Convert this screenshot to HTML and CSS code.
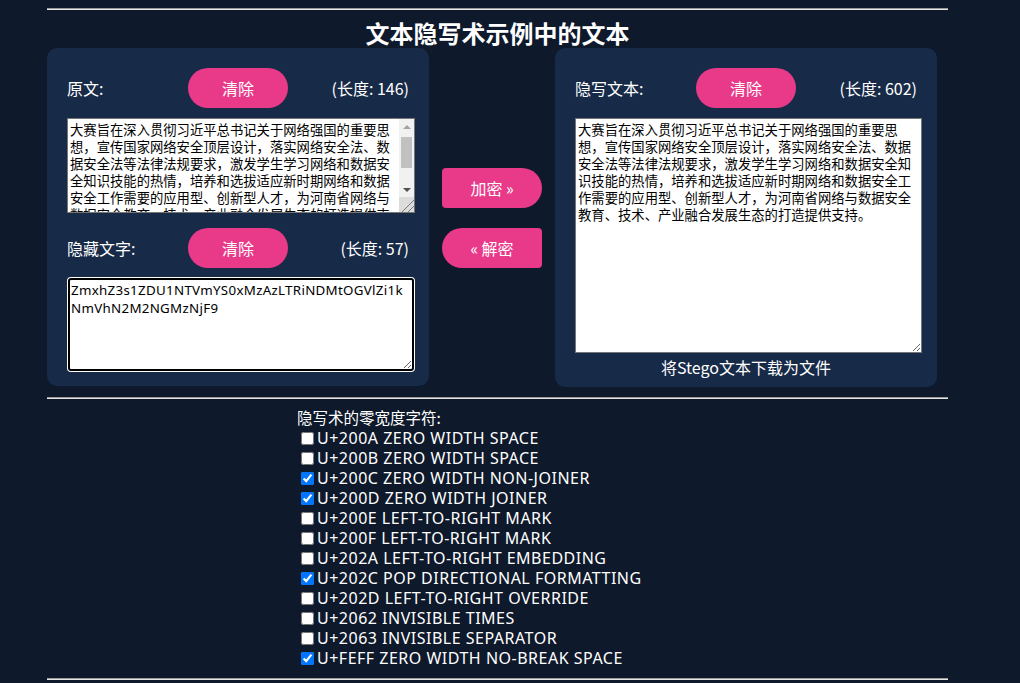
FILE: index.html
```html
<!DOCTYPE html>
<html lang="zh">
<head>
<meta charset="utf-8">
<title>文本隐写术示例中的文本</title>
<link rel="stylesheet" href="styles.css">
</head>
<body>
<div class="page">
  <hr class="rule">
  <h1 class="title">文本隐写术示例中的文本</h1>
  <div class="workspace">
    <section class="panel panel-left">
      <div class="row">
        <span class="label">原文:</span>
        <button class="clear">清除</button>
        <span class="len">(长度: 146)</span>
      </div>
      <div class="plain-wrap">
        <textarea class="box box-plain">大赛旨在深入贯彻习近平总书记关于网络强国的重要思想，宣传国家网络安全顶层设计，落实网络安全法、数据安全法等法律法规要求，激发学生学习网络和数据安全知识技能的热情，培养和选拔适应新时期网络和数据安全工作需要的应用型、创新型人才，为河南省网络与数据安全教育、技术、产业融合发展生态的打造提供支持。</textarea>
        <div class="sbar" aria-hidden="true">
          <div class="sbar-btn"><span class="arrow-up"></span></div>
          <div class="sbar-track"><div class="sbar-thumb"></div></div>
          <div class="sbar-btn"><span class="arrow-down"></span></div>
          <div class="sbar-corner"></div>
        </div>
      </div>
      <div class="row row-second">
        <span class="label">隐藏文字:</span>
        <button class="clear">清除</button>
        <span class="len">(长度: 57)</span>
      </div>
      <textarea class="box box-hidden">ZmxhZ3s1ZDU1NTVmYS0xMzAzLTRiNDMtOGVlZi1k
NmVhN2M2NGMzNjF9</textarea>
    </section>
    <div class="actions">
      <button class="act act-enc">加密 »</button>
      <button class="act act-dec">« 解密</button>
    </div>
    <section class="panel panel-right">
      <div class="row">
        <span class="label">隐写文本:</span>
        <button class="clear">清除</button>
        <span class="len">(长度: 602)</span>
      </div>
      <textarea class="box box-stego">大赛旨在深入贯彻习近平总书记关于网络强国的重要思想，宣传国家网络安全顶层设计，落实网络安全法、数据安全法等法律法规要求，激发学生学习网络和数据安全知识技能的热情，培养和选拔适应新时期网络和数据安全工作需要的应用型、创新型人才，为河南省网络与数据安全教育、技术、产业融合发展生态的打造提供支持。</textarea>
      <div class="download">将Stego文本下载为文件</div>
    </section>
  </div>
  <hr class="rule rule-mid">
  <div class="chars">
    <div class="chars-title">隐写术的零宽度字符:</div>
    <label class="opt"><input type="checkbox">U+200A ZERO WIDTH SPACE</label>
    <label class="opt"><input type="checkbox">U+200B ZERO WIDTH SPACE</label>
    <label class="opt"><input type="checkbox" checked>U+200C ZERO WIDTH NON-JOINER</label>
    <label class="opt"><input type="checkbox" checked>U+200D ZERO WIDTH JOINER</label>
    <label class="opt"><input type="checkbox">U+200E LEFT-TO-RIGHT MARK</label>
    <label class="opt"><input type="checkbox">U+200F LEFT-TO-RIGHT MARK</label>
    <label class="opt"><input type="checkbox">U+202A LEFT-TO-RIGHT EMBEDDING</label>
    <label class="opt"><input type="checkbox" checked>U+202C POP DIRECTIONAL FORMATTING</label>
    <label class="opt"><input type="checkbox">U+202D LEFT-TO-RIGHT OVERRIDE</label>
    <label class="opt"><input type="checkbox">U+2062 INVISIBLE TIMES</label>
    <label class="opt"><input type="checkbox">U+2063 INVISIBLE SEPARATOR</label>
    <label class="opt"><input type="checkbox" checked>U+FEFF ZERO WIDTH NO-BREAK SPACE</label>
  </div>
  <hr class="rule rule-bottom">
</div>
</body>
</html>
```
FILE: styles.css
```css
html, body {
  background: #0e192b;
}
body {
  margin: 8px;
  font-family: "Noto Sans", "Noto Sans CJK SC", sans-serif;
  color: #ffffff;
  font-size: 16px;
}
.page {
  width: 901px;
  margin-left: 39px;
}
.rule {
  margin: 0;
  height: 0;
  border: 0;
  border-top: 1px solid #9a9a9a;
  border-bottom: 1px solid #e6e6e6;
}
.title {
  margin: 10px 0 2px;
  text-align: center;
  font-family: "Noto Sans CJK SC", sans-serif;
  font-size: 24px;
  font-weight: 700;
  line-height: 26px;
  height: 26px;
}
.workspace {
  display: flex;
  align-items: flex-start;
  width: 890px;
}
.panel {
  width: 382px;
  box-sizing: border-box;
  background: #172a48;
  border-radius: 10px;
  padding: 20px 20px 14px 20px;
}
.panel-right {
  padding-bottom: 10px;
}
.row {
  display: grid;
  grid-template-columns: 1fr 1fr 1fr;
  align-items: center;
  height: 40px;
  margin-bottom: 10px;
}
.row-second {
  margin-top: 15px;
}
.label {
  justify-self: start;
  font-family: "Noto Sans CJK SC", sans-serif;
  line-height: 20px;
}
.len {
  justify-self: end;
  font-family: "Noto Sans CJK SC", sans-serif;
  line-height: 20px;
  white-space: nowrap;
}
.clear {
  justify-self: center;
  width: 100px;
  height: 40px;
  border: 0;
  border-radius: 20px;
  background: #e83a88;
  color: #ffffff;
  font-family: "Noto Sans CJK SC", sans-serif;
  font-size: 16px;
  padding: 0;
}
.box {
  display: block;
  box-sizing: border-box;
  width: 348px;
  margin: 0;
  padding: 2px;
  border: 1px solid #767676;
  background: #ffffff;
  color: #000000;
  font-family: "Noto Sans CJK SC", sans-serif;
  font-size: 13.33px;
  line-height: 17px;
  resize: both;
}
.plain-wrap {
  position: relative;
  width: 348px;
  height: 95px;
}
.box-plain {
  height: 95px;
  padding-right: 17px;
  overflow: hidden;
}
.sbar {
  position: absolute;
  top: 1px;
  right: 1px;
  bottom: 1px;
  width: 15px;
  display: flex;
  flex-direction: column;
  background: #f1f1f1;
}
.sbar-btn {
  height: 15px;
  display: flex;
  align-items: center;
  justify-content: center;
}
.arrow-up {
  width: 0;
  height: 0;
  border-left: 4px solid transparent;
  border-right: 4px solid transparent;
  border-bottom: 4px solid #a3a3a3;
}
.arrow-down {
  width: 0;
  height: 0;
  border-left: 4px solid transparent;
  border-right: 4px solid transparent;
  border-top: 4px solid #505050;
}
.sbar-track {
  flex: 1;
  padding: 3px 2px 0;
}
.sbar-thumb {
  height: 31px;
  background: #c1c1c1;
}
.sbar-corner {
  height: 15px;
  background:
    linear-gradient(135deg, transparent 58%, #7a7a7a 58% 63%, transparent 63% 78%, #7a7a7a 78% 83%, transparent 83%),
    #dcdcdc;
}
.box-hidden {
  width: 346px;
  height: 93px;
  margin: 1px;
  border: 2px solid #000000;
  border-radius: 3px;
  box-shadow: 0 0 0 1px #ffffff;
  padding: 1px;
  font-family: "Noto Sans", sans-serif;
  letter-spacing: 0.3px;
  line-height: 18px;
  outline: none;
}
.box-stego {
  width: 347px;
  height: 235px;
}
.download {
  margin-top: 4px;
  text-align: center;
  font-family: "Noto Sans CJK SC", sans-serif;
  line-height: 20px;
}
.actions {
  width: 126px;
  align-self: stretch;
  display: flex;
  flex-direction: column;
  align-items: center;
  justify-content: center;
  gap: 20px;
}
.act {
  width: 100px;
  height: 40px;
  border: 0;
  padding: 0;
  background: #e83a88;
  color: #ffffff;
  font-family: "Noto Sans CJK SC", sans-serif;
  font-size: 16px;
}
.act-enc {
  border-radius: 4px 20px 20px 4px;
}
.act-dec {
  border-radius: 20px 4px 4px 20px;
}
.rule-mid {
  margin-top: 10px;
}
.chars {
  margin: 8px 0 0 250px;
}
.chars-title {
  font-family: "Noto Sans CJK SC", sans-serif;
  font-size: 15.5px;
  line-height: 20px;
  margin-bottom: 1px;
}
.opt {
  display: flex;
  align-items: center;
  height: 20px;
  line-height: 20px;
  letter-spacing: 0.5px;
  white-space: nowrap;
}
.opt input {
  width: 13px;
  height: 13px;
  margin: 0 3px 0 4px;
}
.rule-bottom {
  margin-top: 10px;
}
```
